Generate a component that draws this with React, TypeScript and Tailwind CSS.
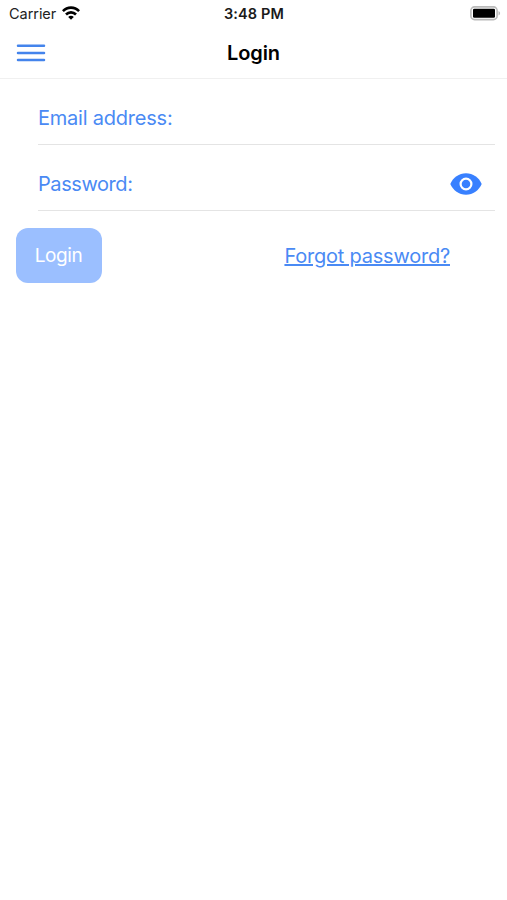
import React from 'react';

const fields = [
    { id: 'email', label: 'Email address:', secure: false, tracking: 'tracking-[-0.22px]' },
    { id: 'password', label: 'Password:', secure: true, tracking: 'tracking-[-0.42px]' },
];

const WifiIcon = () => (
    <svg width="18" height="14" viewBox="0 0 18 14" fill="none" stroke="#000" strokeWidth="2.6">
        <path d="M.9 5.2C5.4.4 12.6.4 17.1 5.2" />
        <path d="M4 8.5c2.8-2.9 7.2-2.9 10 0" />
        <path d="M9 13.7 6.2 10.900c1.600-1.500 4-1.500 5.600 0Z" fill="#000" stroke="none" />
    </svg>
);

const BatteryIcon = () => (
    <svg width="31" height="15" viewBox="0 0 31 15" fill="none">
        <rect x="0.9" y="0.9" width="26.2" height="12.7" rx="3.6" stroke="#bababa" strokeWidth="1.6" />
        <rect x="3" y="2.7" width="22" height="9.1" rx="1.3" fill="#000" />
        <path d="M28.5 5v4.5c2.1-.8 2.1-3.7 0-4.5Z" fill="#bababa" />
    </svg>
);

const MenuIcon = () => (
    <svg width="30" height="20" viewBox="0 0 30 20" stroke="#4484ec" strokeWidth="2.5" strokeLinecap="round">
        <path d="M2 2.7h26M2 9.9h26M2 17.1h26" />
    </svg>
);

const EyeIcon = () => (
    <svg width="32" height="22" viewBox="0 0 32 22">
        <path d="M16 .3C9 .3 3 4.7.3 11 3 17.3 9 21.7 16 21.7S29 17.3 31.7 11C29 4.7 23 .3 16 .3Z" fill="#3880ff" />
        <circle cx="16" cy="11" r="5.4" fill="none" stroke="#fff" strokeWidth="2.2" />
    </svg>
);

const App = () => {
    return (
        <div className="min-h-[900px] w-full bg-white font-['Inter','Liberation_Sans',sans-serif] text-black">
            <div className="grid h-[27px] grid-cols-3 items-center pl-[9px] pr-[6px]">
                <div className="flex items-center gap-[6px] pt-px text-[14.5px] text-[#222]">
                    <span className="tracking-[-0.05px]">Carrier</span>
                    <span className="pb-[3px]">
                        <WifiIcon />
                    </span>
                </div>
                <div className="pr-[2px] pt-px text-center text-[14.5px] font-semibold tracking-[0.15px] text-[#1a1a1a]">3:48 PM</div>
                <div className="flex justify-end">
                    <BatteryIcon />
                </div>
            </div>

            <header className="grid h-[52px] grid-cols-3 items-center border-b border-[#f0f0f0] px-4">
                <button aria-label="Menu" className="w-fit">
                    <MenuIcon />
                </button>
                <h1 className="text-center text-[20px] font-semibold tracking-[-0.1px]">Login</h1>
            </header>

            <main>
                {fields.map((field) => (
                    <div key={field.id} className="ml-[38px] mr-3 flex h-[66px] items-center justify-between border-b border-[#e4e4e4] pr-[13px] pt-3">
                        <span className={`text-[20px] text-[#4a8af4] ${field.tracking}`}>{field.label}</span>
                        {field.secure && <EyeIcon />}
                    </div>
                ))}
                <div className="mt-[17px] flex items-center justify-between pl-[15.5px] pr-[57px]">
                    <button className="h-[55px] w-[86px] rounded-[12px] bg-[#9bbfff] pt-[2px] text-[19px] tracking-[-0.4px] text-white">Login</button>
                    <a href="#" className="pt-px text-[20px] tracking-[-0.22px] text-[#4a8af4] underline">Forgot password?</a>
                </div>
            </main>
        </div>
    );
};

export default App;
